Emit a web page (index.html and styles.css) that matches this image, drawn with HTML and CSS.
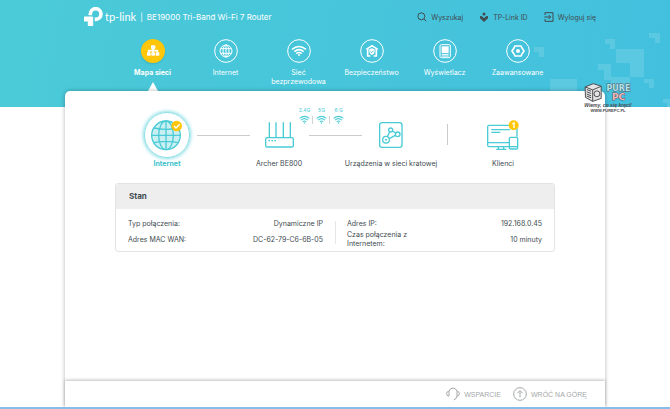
FILE: index.html
```html
<!DOCTYPE html>
<html lang="pl">
<head>
<meta charset="utf-8">
<title>TP-Link BE19000</title>
<meta name="viewport" content="width=device-width, initial-scale=1">
<link rel="stylesheet" href="styles.css">
</head>
<body>
<svg class="mosaic" viewBox="0 0 140 107" aria-hidden="true">
  <path d="M4 47h10v10h-5v-5h-5zM75 39h10v10h-5v-5h-5zM119 33h11v10h-5v-5h-6zM86 49h28v28h-14v-14h-14zM68 64h13v16h-7v-10h-6zM81 77h19v10h-19zM114 79h10v9h-5v-5h-5zM133 99h7v8h-3v-4h-4zM20 79h27v12h-27z"/>
</svg>
<div class="page">
  <header class="masthead">
    <div class="brand">
      <svg class="brand-mark" viewBox="0 0 57 57" aria-hidden="true">
        <path d="M19 25v-4a16 16 0 1 1 16 16h-3" fill="none" stroke="#fff" stroke-width="11"/>
        <path d="M0 30h26v27H13V42H0z" fill="#fff"/>
      </svg>
      <span class="brand-name">tp-link</span>
      <span class="brand-bar">|</span>
      <span class="brand-model">BE19000 Tri-Band Wi-Fi 7 Router</span>
    </div>
    <nav class="tools" aria-label="Konto">
      <a href="#search"><svg viewBox="0 0 30 30"><circle cx="13" cy="13" r="10.5"/><path d="M21 21l7 7"/></svg>Wyszukaj</a>
      <a href="#id"><svg viewBox="0 0 30 30"><g class="solid"><circle cx="15" cy="6" r="4.500"/><path d="M3 12l6 1 6 6 6-6 6-1v7L15 30 3 19z"/></g></svg>TP-Link ID</a>
      <a href="#logout"><svg viewBox="0 0 30 30"><path d="M3 9V2h24v26H3v-7M1 15h18M14 9l6 6-6 6"/></svg>Wyloguj się</a>
    </nav>
  </header>

  <nav class="menu" aria-label="Menu główne">
    <a class="active" href="#map"><svg viewBox="0 0 72 72"><g class="solid"><rect x="30" y="19" width="13" height="11" rx="2"/><rect x="18" y="40" width="11" height="10" rx="2"/><rect x="31" y="40" width="11" height="10" rx="2"/><rect x="44" y="40" width="11" height="10" rx="2"/></g><path class="thick" d="M36 29v12M23 41v-6h26v6"/></svg>Mapa sieci</a>
    <a href="#internet"><svg viewBox="0 0 72 72"><circle cx="36" cy="36" r="34"/><circle cx="36" cy="36" r="18"/><ellipse cx="36" cy="36" rx="9" ry="18"/><path d="M36 18v36M20 29h32M20 43h32"/></svg>Internet</a>
    <a href="#wifi"><svg viewBox="0 0 72 72"><circle cx="36" cy="36" r="34"/><path class="thick" d="M15 31q21-17 42 0M22 38q14-12 28 0M28 44q8-7 16 0"/><circle class="solid" cx="36" cy="48" r="3"/></svg><span>Sieć<br>bezprzewodowa</span></a>
    <a href="#security"><svg viewBox="0 0 72 72"><circle cx="36" cy="36" r="34"/><path class="thick" d="M19 31L36 20l17 11M23 30v21h8M49 30v21h-8"/><path class="solid" d="M28 31l8-3 8 3v8q-2 7-8 9-6-2-8-9z"/><path class="accent" d="M32 38l3 3 6-6"/></svg>Bezpieczeństwo</a>
    <a href="#display"><svg viewBox="0 0 72 72"><circle cx="36" cy="36" r="34"/><rect x="21" y="17" width="31" height="39" rx="4"/><rect class="solid" x="26" y="22" width="21" height="20"/><path d="M26 46h21M26 51h21"/></svg>Wyświetlacz</a>
    <a href="#advanced"><svg viewBox="0 0 72 72"><circle cx="36" cy="36" r="34"/><path class="thick" d="M27 21h18l3 6 6 9-6 9-3 6H27l-3-6-6-9 6-9z"/><circle class="solid" cx="36" cy="36" r="6"/></svg>Zaawansowane</a>
  </nav>

  <div class="panel">
    <main class="content">
      <div class="topology">
        <a class="node selected" href="#wan">
          <span class="node-art halo"><svg class="globe" viewBox="0 0 96 96"><circle class="tint" cx="45" cy="49" r="43"/><ellipse cx="45" cy="49" rx="22" ry="43"/><path d="M45 6v86M2 49h86M9 27q36 8 72 0M9 71q36-8 72 0"/><circle class="gold" cx="77" cy="21" r="16"/><path class="tick" d="M69 21l6 6 11-11"/></svg></span>
          <span>Internet</span>
        </a>
        <a class="node" href="#router">
          <span class="node-art"><svg class="router" viewBox="0 0 87 78"><rect x="2" y="47" width="83" height="28" rx="4"/><path d="M13 46V1M33 46V1M55 46V1M76 46V1"/><path class="leds" d="M10 56h5M19 56h5M28 56h5"/></svg></span>
          <span>Archer BE800</span>
          <span class="bands">
            <span class="band">2.4G<svg viewBox="0 0 32 26"><path d="M2 10q14-12 28 0M6 15q10-9 20 0M11 20q5-5 10 0"/><circle class="fill" cx="16" cy="23" r="2"/></svg></span>
            <span class="band">5G<svg viewBox="0 0 32 26"><path d="M2 10q14-12 28 0M6 15q10-9 20 0M11 20q5-5 10 0"/><circle class="fill" cx="16" cy="23" r="2"/></svg></span>
            <span class="band">6 G<svg viewBox="0 0 32 26"><path d="M2 10q14-12 28 0M6 15q10-9 20 0M11 20q5-5 10 0"/><circle class="fill" cx="16" cy="23" r="2"/></svg></span>
          </span>
        </a>
        <a class="node" href="#mesh">
          <span class="node-art"><svg class="mesh" viewBox="0 0 72 78"><rect x="2" y="2" width="67" height="74" rx="7"/><circle cx="21" cy="53" r="10"/><circle class="fill" cx="21" cy="53" r="3"/><circle cx="35" cy="24" r="6"/><circle cx="56" cy="37" r="7"/><path d="M25 44l7-14M31 50l18-10M40 27l10 6"/></svg></span>
          <span>Urządzenia w sieci kratowej</span>
        </a>
        <a class="node" href="#clients">
          <span class="node-art"><svg class="clients" viewBox="0 0 96 90"><path d="M66 80H6q-4 0-4-4V20q0-4 4-4h80q4 0 4 4v30M2 68h64M34 80v7M50 80v7M28 88h30"/><path d="M13 29h56M13 37h27"/><rect class="phone" x="67" y="52" width="25" height="35" rx="4"/><path d="M67 80h25"/><circle class="gold" cx="80" cy="16" r="15"/><path class="tick" d="M76 12l5-3v15"/></svg></span>
          <span>Klienci</span>
        </a>
      </div>

      <section class="card">
        <h2>Stan</h2>
        <div class="card-body">
          <dl>
            <div><dt>Typ połączenia:</dt><dd>Dynamiczne IP</dd></div>
            <div><dt>Adres MAC WAN:</dt><dd>DC-62-79-C6-6B-05</dd></div>
          </dl>
          <dl>
            <div><dt>Adres IP:</dt><dd>192.168.0.45</dd></div>
            <div><dt>Czas połączenia z Internetem:</dt><dd>10 minuty</dd></div>
          </dl>
        </div>
      </section>
    </main>
    <footer class="footer">
      <a href="#support"><svg viewBox="0 0 42 42"><path d="M9 27H7q-5-1-5-7t5-7h2zM9 13Q12 3 21 3t12 10v14h2q5-1 5-7t-5-7h-2M33 27q-1 9-10 12"/></svg>WSPARCIE</a>
      <a href="#top"><svg viewBox="0 0 42 42"><circle cx="21" cy="21" r="19"/><path d="M21 31V12M13 19l8-8 8 8"/></svg>WRÓĆ NA GÓRĘ</a>
    </footer>
  </div>
</div>

<div class="stamp">
  <div class="stamp-top">
    <svg viewBox="0 0 54 58"><path class="case" d="M3 12L28 2l24 8v37L26 56 4 44zM3 12l23 9v35M26 21l26-11"/><path class="detail" d="M8 20l13 5M8 27l13 5M8 34l13 5M8 40l13 5"/><circle class="detail" cx="39" cy="33" r="9"/></svg>
    <div class="stamp-name"><span>PURE</span><span class="stamp-pc">PC</span></div>
  </div>
  <span class="stamp-motto">Wiemy, co się kręci!</span>
  <span class="stamp-site">WWW.PUREPC.PL</span>
</div>
</body>
</html>
```

FILE: styles.css
```css
* {
  box-sizing: border-box;
}

body {
  margin: 0;
  min-height: 100vh;
  position: relative;
  display: flex;
  flex-direction: column;
  font: 7px/9px Inter, "Liberation Sans", Arial, sans-serif;
  color: #414b50;
  background: linear-gradient(100deg, #4bcad7, #43c0de) top / 100% 107px no-repeat #fff;
  border-bottom: 2px solid #86bee9;
}

a {
  color: inherit;
  text-decoration: none;
}

svg {
  display: block;
  flex: none;
  fill: none;
  stroke: currentColor;
  stroke-width: 3;
}

.solid,
.fill {
  fill: currentColor;
  stroke: none;
}

.mosaic {
  position: absolute;
  top: 0;
  right: 0;
  width: 140px;
  height: 107px;
  fill: #fff;
  fill-opacity: 0.13;
  stroke: none;
}

.page {
  position: relative;
  flex: 1;
  display: flex;
  flex-direction: column;
  margin: 0 65px;
}

.masthead {
  display: flex;
  justify-content: space-between;
  align-items: center;
  height: 34px;
  padding: 0 9px 0 19px;
}

.brand {
  display: flex;
  align-items: center;
  color: #fff;
  font-size: 8px;
}

.brand-mark {
  width: 19px;
  height: 19px;
  margin: -2px 2px 0 0;
}

.brand-name {
  font: 11px/12px Lato, sans-serif;
}

.brand-bar {
  margin: 0 4px;
}

.tools {
  display: flex;
  gap: 16px;
}

.tools a {
  display: flex;
  align-items: center;
  gap: 4px;
}

.tools svg {
  width: 10px;
  height: 10px;
}

.menu {
  display: grid;
  grid-template-columns: repeat(6, 1fr);
  height: 57px;
  padding: 5px 51px 0;
  color: #fff;
  text-align: center;
}

.menu a {
  position: relative;
  display: flex;
  flex-direction: column;
  align-items: center;
  gap: 5px;
}

.menu svg {
  width: 24px;
  height: 24px;
}

.menu .thick {
  stroke-width: 5;
}

.menu .accent {
  stroke: #46c4da;
}

.menu .active {
  font-weight: bold;
}

.menu .active svg {
  border-radius: 50%;
  background: #ffc60a;
  box-shadow: 0 1px 2px #2b8fa066;
}

.menu .active::after {
  content: "";
  position: absolute;
  bottom: 0;
  border: 5px solid transparent;
  border-top: 0;
  border-bottom: 9px solid #fff;
}

.panel {
  flex: 1;
  display: flex;
  flex-direction: column;
  background: #fff;
  border-radius: 5px 5px 0 0;
  box-shadow: 0 0 4px #0000004d;
  clip-path: inset(-6px -6px 0);
}

.content {
  flex: 1;
  padding: 16px 50px;
}

.topology {
  display: grid;
  grid-template-columns: repeat(4, 1fr);
  margin: 0 -4px 15px;
}

.node {
  position: relative;
  display: flex;
  flex-direction: column;
  align-items: center;
  white-space: nowrap;
}

.node-art {
  display: grid;
  place-items: center;
  width: 46px;
  height: 46px;
  margin: 5px 0 1px;
  color: #4acbd6;
}

.node svg {
  stroke-width: 4;
}

.halo {
  border: 1px solid #8adfe6;
  border-radius: 50%;
  box-shadow: 0 0 4px #4acbd6;
}

.selected {
  color: #3bbfcc;
  font-weight: bold;
}

.node::after {
  content: "";
  position: absolute;
  top: 28px;
  left: calc(50% + 30px);
  width: 53px;
  height: 1px;
  background: #c9cbcc;
}

.node:nth-child(3)::after {
  top: 17px;
  left: 100%;
  width: 1px;
  height: 21px;
}

.node:last-child::after {
  content: none;
}

.node .globe {
  width: 32px;
  height: 32px;
}

.router {
  width: 29px;
  height: 26px;
}

.mesh {
  width: 24px;
  height: 26px;
}

.clients {
  width: 32px;
  height: 30px;
}

.tint {
  fill: #c9eff2;
}

.phone {
  fill: #fff;
}

.gold {
  fill: #ffc60a;
  stroke: none;
}

.tick {
  stroke: #fff;
}

.bands {
  position: absolute;
  top: 0;
  left: calc(50% + 17px);
  display: flex;
  color: #4acbd6;
  font-size: 5px;
  line-height: 6px;
}

.band {
  display: flex;
  flex-direction: column;
  align-items: center;
  gap: 2px;
  width: 17px;
  background: linear-gradient(#d0d2d3, #d0d2d3) right bottom / 1px 8px no-repeat;
}

.band:last-child {
  background: none;
}

.band svg {
  width: 11px;
  height: 9px;
  stroke-width: 3;
}

.card {
  border: 1px solid #e1e3e4;
  border-radius: 3px;
}

.card h2 {
  margin: 0;
  padding: 8px 13px;
  font-size: 8px;
  line-height: 9px;
  background: #eee;
}

.card-body {
  display: grid;
  grid-template-columns: 1fr 1fr;
  padding: 8px 0 3px;
}

.card dl {
  margin: 0;
  padding: 0 12px;
}

.card dl + dl {
  background: linear-gradient(#e4e6e7, #e4e6e7) left center / 1px 23px no-repeat;
}

.card dl div {
  display: flex;
  align-items: center;
  justify-content: space-between;
  min-height: 13px;
}

.card dl div + div {
  min-height: 18px;
}

.card dt {
  max-width: 66px;
}

.card dd {
  margin: 0;
}

.footer {
  display: flex;
  justify-content: flex-end;
  align-items: center;
  gap: 12px;
  height: 26px;
  padding: 0 18px;
  color: #a5a8aa;
  font-family: "Liberation Sans", Arial, sans-serif;
  box-shadow: 0 -1px 3px #00000040;
}

.footer a {
  display: flex;
  align-items: center;
  gap: 4px;
}

.footer svg {
  width: 14px;
  height: 14px;
}

.stamp {
  position: absolute;
  top: 83px;
  right: 36px;
  width: 52px;
  color: #4c4c50;
  font: 4px/5px "Liberation Sans", Arial, sans-serif;
  text-align: center;
}

.stamp-top {
  display: flex;
  gap: 1px;
  margin-left: 2px;
}

.stamp svg {
  width: 18px;
  height: 19px;
}

.case {
  fill: #e4e4e6;
}

.stamp-name {
  display: flex;
  flex-direction: column;
  flex: 1;
  padding-top: 3px;
  font: bold 8px/6px "DejaVu Sans", sans-serif;
  color: #aee4ee;
  -webkit-text-stroke: 1px #55595e;
  paint-order: stroke fill;
}

.stamp-name .stamp-pc {
  font-size: 9px;
  line-height: 10px;
  color: #f4b8bc;
}

.stamp-motto,
.stamp-site {
  display: block;
  font-weight: bold;
  white-space: nowrap;
}

.stamp-motto {
  font-size: 5px;
  line-height: 6px;
  font-style: italic;
}
```
